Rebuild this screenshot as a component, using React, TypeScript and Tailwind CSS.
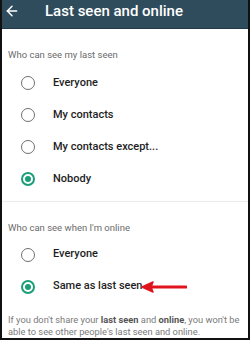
import React, { useState } from 'react';
import { ArrowLeft } from 'lucide-react';

const lastSeenOptions = ['Everyone', 'My contacts', 'My contacts except...', 'Nobody'];
const onlineOptions = ['Everyone', 'Same as last seen'];

const Radio: React.FC<{ checked: boolean }> = ({ checked }) => (
  <span
    className={
      checked
        ? 'flex h-[14px] w-[14px] shrink-0 items-center justify-center rounded-full border-2 border-[#1a9e78]'
        : 'flex h-[14px] w-[14px] shrink-0 items-center justify-center rounded-full border-[1.5px] border-[#6f6f6f]'
    }
  >
    {checked && <span className="h-[6px] w-[6px] rounded-full bg-[#1a9e78]" />}
  </span>
);

const OptionRow: React.FC<{ label: string; checked: boolean; onClick: () => void; marked?: boolean }> = ({
  label,
  checked,
  onClick,
  marked,
}) => (
  <button onClick={onClick} className="flex h-[32px] w-full items-center text-left">
    <span className="flex w-[51px] justify-center">
      <Radio checked={checked} />
    </span>
    <span className="text-[11px] font-medium text-[#1e1e1e]">{label}</span>
    {marked && (
      <svg width="46" height="12" viewBox="0 0 46 12" className="-ml-[1px]">
        <path d="M10 6 H45" stroke="#e0141c" strokeWidth="3" strokeLinecap="round" />
        <path d="M1 6 L12 1 L10 6 L12 11 Z" fill="#e0141c" stroke="#e0141c" strokeWidth="1.5" strokeLinejoin="round" />
      </svg>
    )}
  </button>
);

const App: React.FC = () => {
  const [lastSeen, setLastSeen] = useState('Nobody');
  const [online, setOnline] = useState('Same as last seen');

  return (
    <div
      className="h-[340px] w-[250px] overflow-hidden border-b-2 border-l-2 border-r-2 border-[#111] bg-white"
      style={{ fontFamily: 'Roboto, "Noto Sans", sans-serif' }}
    >
      {/* ── Header ── */}
      <div className="flex h-[29px] items-center border-b border-[#22394a] bg-[#2f4c5c]">
        <ArrowLeft size={16} strokeWidth={2.2} className="ml-[2px] -mt-[6px] text-white" />
        <h1 className="ml-[25px] -mt-[6px] text-[15px] font-medium leading-none text-white">Last seen and online</h1>
      </div>

      {/* ── Last seen ── */}
      <div className="border-b border-[#ececec] pb-[6px]">
        <p className="pl-[6px] pt-[19px] text-[9.5px] text-[#6b6b6b]">Who can see my last seen</p>
        <div className="mt-[5px]">
          {lastSeenOptions.map(opt => (
            <OptionRow key={opt} label={opt} checked={lastSeen === opt} onClick={() => setLastSeen(opt)} />
          ))}
        </div>
      </div>

      {/* ── Online ── */}
      <div>
        <p className="pl-[6px] pt-[19px] text-[9.5px] text-[#6b6b6b]">Who can see when I'm online</p>
        <div className="mt-[3px]">
          {onlineOptions.map(opt => (
            <OptionRow
              key={opt}
              label={opt}
              checked={online === opt}
              onClick={() => setOnline(opt)}
              marked={opt === 'Same as last seen'}
            />
          ))}
        </div>
        <p className="whitespace-nowrap px-[6px] pt-[11px] text-[9.3px] leading-[12px] text-[#7a7a7a]">
          If you don't share your <b className="font-bold text-[#555]">last seen</b> and{' '}
          <b className="font-bold text-[#555]">online</b>, you won't be
          <br />
          able to see other people's last seen and online.
        </p>
      </div>
    </div>
  );
};

export default App;
